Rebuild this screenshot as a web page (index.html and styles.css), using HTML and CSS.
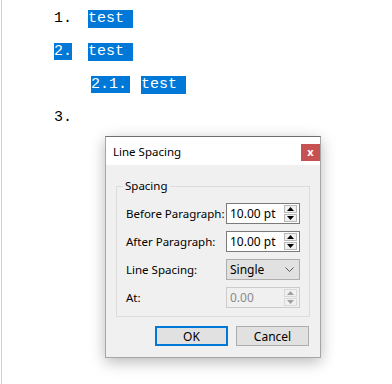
FILE: index.html
```html
<html>

<head>

    <meta name="viewport" content="width=device-width, initial-scale=1.0">

    <title>Line Spacing</title>

    <link rel="stylesheet" href="styles.css">

</head>

<body>

    <div class="editor">

        <div class="item">
            <span class="num">1.</span>
            <span class="sel">test </span>
        </div>

        <div class="item">
            <span class="num"><span class="sel">2.</span></span>
            <span class="sel">test </span>
        </div>

        <div class="item sub">
            <span class="num"><span class="sel sel-pad">2.1.</span></span>
            <span class="sel">test </span>
        </div>

        <div class="item">
            <span class="num">3.</span>
        </div>

    </div>

    <div class="dialog">

        <div class="titlebar">
            <span class="title">Line Spacing</span>
            <span class="close">x</span>
        </div>

        <div class="content">

            <div class="group">

                <span class="legend">Spacing</span>

                <div class="row">
                    <span class="label">Before Paragraph:</span>
                    <div class="spin">
                        <span class="val">10.00 pt</span>
                        <div class="spin-btns">
                            <span class="spin-btn"><svg width="7" height="4" viewBox="0 0 7 4"><polygon points="0,4 7,4 3.5,0" fill="#000"/></svg></span>
                            <span class="spin-btn"><svg width="7" height="4" viewBox="0 0 7 4"><polygon points="0,0 7,0 3.5,4" fill="#000"/></svg></span>
                        </div>
                    </div>
                </div>

                <div class="row">
                    <span class="label">After Paragraph:</span>
                    <div class="spin">
                        <span class="val">10.00 pt</span>
                        <div class="spin-btns">
                            <span class="spin-btn"><svg width="7" height="4" viewBox="0 0 7 4"><polygon points="0,4 7,4 3.5,0" fill="#000"/></svg></span>
                            <span class="spin-btn"><svg width="7" height="4" viewBox="0 0 7 4"><polygon points="0,0 7,0 3.5,4" fill="#000"/></svg></span>
                        </div>
                    </div>
                </div>

                <div class="row">
                    <span class="label">Line Spacing:</span>
                    <div class="combo">
                        <span class="val">Single</span>
                        <svg class="chevron" width="9" height="5" viewBox="0 0 9 5"><polyline points="0.5,0.5 4.5,4.5 8.5,0.5" fill="none" stroke="#555" stroke-width="1"/></svg>
                    </div>
                </div>

                <div class="row">
                    <span class="label">At:</span>
                    <div class="spin disabled">
                        <span class="val">0.00</span>
                        <div class="spin-btns">
                            <span class="spin-btn"><svg width="7" height="4" viewBox="0 0 7 4"><polygon points="0,4 7,4 3.5,0" fill="#a0a0a0"/></svg></span>
                            <span class="spin-btn"><svg width="7" height="4" viewBox="0 0 7 4"><polygon points="0,0 7,0 3.5,4" fill="#a0a0a0"/></svg></span>
                        </div>
                    </div>
                </div>

            </div>

            <div class="buttons">
                <button class="btn btn-default">OK</button>
                <button class="btn">Cancel</button>
            </div>

        </div>

    </div>

</body>

</html>
```

FILE: styles.css
```css
body {
    margin: 0;
    padding: 0;
    background-color: #ffffff;
    width: 392px;
    height: 384px;
    overflow: hidden;
}

.editor {
    margin-left: 1px;
    border-left: 1px solid #cfcfcf;
    height: 384px;
    box-sizing: border-box;
    padding-top: 10px;
    font-family: "Liberation Mono", "Courier New", monospace;
    font-size: 15px;
    color: #000;
}

.item {
    display: flex;
    line-height: 18px;
    height: 18px;
    padding-left: 52px;
    margin-bottom: 15px;
    white-space: pre;
}

.item.sub {
    padding-left: 89px;
}

.num {
    width: 34px;
    display: block;
}

.sub .num {
    width: 50px;
}

.sel {
    background-color: #0078d7;
    color: #ffffff;
}

.sel-pad {
    padding-right: 3px;
}

/* dialogo */

.dialog {
    position: absolute;
    left: 105px;
    top: 136px;
    width: 216px;
    height: 222px;
    box-sizing: border-box;
    border: 1px solid #a6a6a6;
    border-top-color: #6e6e6e;
    background-color: #f0f0f0;
    box-shadow: 0 4px 14px rgba(0, 0, 0, 0.28);
    font-family: "Noto Sans", "Open Sans", sans-serif;
    font-size: 11.5px;
    color: #000;
}

.titlebar {
    position: relative;
    height: 28px;
    background-color: #ffffff;
    display: flex;
    align-items: center;
    padding-left: 7px;
}

.close {
    position: absolute;
    right: 0;
    top: 7px;
    width: 19px;
    height: 17px;
    background-color: #c75050;
    color: #ffffff;
    font-weight: bold;
    font-size: 11px;
    line-height: 15px;
    text-align: center;
}

.content {
    padding: 0 10px;
}

.group {
    margin-top: 21px;
    border: 1px solid #dcdcdc;
    padding: 0 9px 8px 9px;
}

.legend {
    display: block;
    width: fit-content;
    margin: -9px 0 0 -3px;
    padding: 0 2px;
    line-height: 16px;
    background-color: #f0f0f0;
}

.row {
    display: flex;
    align-items: center;
    height: 21px;
}

.legend + .row {
    margin-top: 9px;
}

.row + .row {
    margin-top: 7px;
}

.label {
    flex: 1;
    white-space: nowrap;
}

.spin,
.combo {
    width: 74px;
    height: 21px;
    flex-shrink: 0;
    box-sizing: border-box;
    display: flex;
    align-items: center;
}

.spin {
    border: 1px solid #7a7a7a;
    background-color: #ffffff;
}

.val {
    flex: 1;
    padding-left: 3px;
    font-size: 12px;
}

.spin-btns {
    display: flex;
    flex-direction: column;
    gap: 1px;
    margin-right: 2px;
}

.spin-btn {
    width: 13px;
    height: 8px;
    box-sizing: border-box;
    border: 1px solid #b9b9b9;
    background-color: #f0f0f0;
    display: flex;
    align-items: center;
    justify-content: center;
}

.spin.disabled {
    border-color: #cccccc;
    background-color: #f0f0f0;
    color: #8a8a8a;
}

.spin.disabled .spin-btn {
    border-color: #d9d9d9;
}

.combo {
    border: 1px solid #adadad;
    background-color: #e1e1e1;
}

.chevron {
    margin-right: 5px;
}

.buttons {
    display: flex;
    justify-content: flex-end;
    gap: 8px;
    margin-top: 9px;
    padding-right: 1px;
}

.btn {
    width: 73px;
    height: 20px;
    box-sizing: border-box;
    border: 1px solid #adadad;
    background-color: #e1e1e1;
    font-family: "Noto Sans", "Open Sans", sans-serif;
    font-size: 12px;
    padding: 0;
    color: #000;
}

.btn-default {
    border: 2px solid #0078d7;
}
```
